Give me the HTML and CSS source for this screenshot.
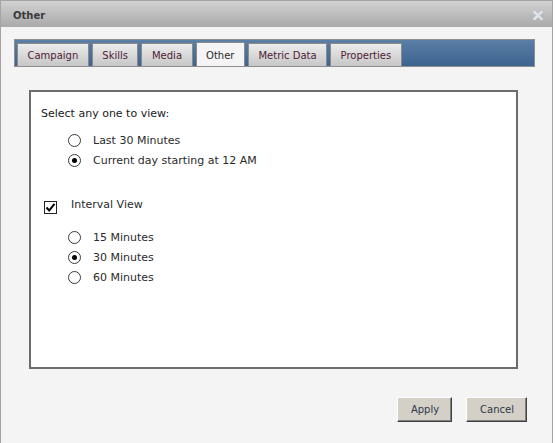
FILE: index.html
```html
<!DOCTYPE html>
<html>
<head>
<meta charset="utf-8">
<link rel="stylesheet" href="styles.css">
</head>
<body>
<div class="dialog">
  <div class="titlebar">
    <span class="title">Other</span>
    <svg class="close" width="10" height="9" viewBox="0 0 10 9"><path d="M1.5 1 L8.5 8 M8.5 1 L1.5 8" stroke="#dde6f0" stroke-width="2.4" stroke-linecap="square"/></svg>
  </div>
  <div class="body">
    <div class="tabstrip">
      <div class="tab">Campaign</div>
      <div class="tab">Skills</div>
      <div class="tab">Media</div>
      <div class="tab active">Other</div>
      <div class="tab">Metric Data</div>
      <div class="tab">Properties</div>
    </div>
    <div class="panel">
      <div class="heading">Select any one to view:</div>
      <div class="options">
        <label class="opt"><span class="radio"></span>Last 30 Minutes</label>
        <label class="opt"><span class="radio on"></span>Current day starting at 12 AM</label>
      </div>
      <label class="check-row"><span class="checkbox"><svg width="11" height="11" viewBox="0 0 11 11"><path d="M1.5 5.5 L4.2 8.5 L9.5 1.8" fill="none" stroke="#000" stroke-width="2"/></svg></span>Interval View</label>
      <div class="options sub">
        <label class="opt"><span class="radio"></span>15 Minutes</label>
        <label class="opt"><span class="radio on"></span>30 Minutes</label>
        <label class="opt"><span class="radio"></span>60 Minutes</label>
      </div>
    </div>
    <div class="actions">
      <button class="btn">Apply</button>
      <button class="btn">Cancel</button>
    </div>
  </div>
</div>
</body>
</html>
```
FILE: styles.css
```css
html, body {
  margin: 0;
  padding: 0;
  background: #ffffff;
}
body {
  font-family: "DejaVu Sans", Verdana, sans-serif;
  font-size: 11px;
  color: #222;
}
.dialog {
  width: 551px;
  height: 460px;
  border: 1px solid #a4a4a4;
  background: #f4f4f4;
  overflow: hidden;
}
.titlebar {
  height: 26px;
  background: linear-gradient(#d2d2d2, #a9a9a9);
  display: flex;
  align-items: center;
  justify-content: space-between;
  padding: 0 9px 0 12px;
}
.title {
  font-weight: bold;
  font-size: 10px;
  color: #3a3a3a;
  line-height: 12px;
  padding-top: 4px;
}
.close {
  display: block;
  margin-top: 3px;
}
.body {
  padding: 12px 0 0 13px;
}
.tabstrip {
  width: 515px;
  height: 23px;
  border: 1px solid #8e8e8e;
  padding: 3px 2px 0 2px;
  background: linear-gradient(#5b7fa5, #3c648f);
  display: flex;
  align-items: flex-end;
  gap: 3px;
}
.tab {
  height: 22px;
  line-height: 24px;
  padding: 0 9.5px;
  border: 1px solid #8a8a8a;
  border-bottom: none;
  background: linear-gradient(#ececec, #c6c6c6);
  font-size: 10px;
  color: #4f2236;
  overflow: hidden;
}
.tab.active {
  height: 23px;
  line-height: 25px;
  background: #f4f4f4;
  color: #2b2b2b;
}
.panel {
  margin: 23px 0 0 15px;
  width: 475px;
  height: 260px;
  border: 2px solid #6c6c6c;
  background: #fff;
  padding: 15px 0 0 10px;
}
.heading {
  line-height: 14px;
  color: #1a1a1a;
}
.options {
  margin: 13px 0 0 27px;
  display: flex;
  flex-direction: column;
  gap: 6px;
}
.opt {
  display: flex;
  align-items: center;
  height: 14px;
  line-height: 14px;
  color: #2a2a2a;
}
.radio {
  width: 11px;
  height: 11px;
  border: 1px solid #3a3a3a;
  border-radius: 50%;
  background: #fff;
  margin-right: 12px;
  position: relative;
  flex: none;
  margin-top: -1px;
}
.radio.on::after {
  content: "";
  position: absolute;
  left: 3px;
  top: 3px;
  width: 5px;
  height: 5px;
  border-radius: 50%;
  background: #000;
}
.check-row {
  display: flex;
  align-items: flex-start;
  margin: 30px 0 0 3px;
  line-height: 14px;
  color: #2a2a2a;
}
.checkbox {
  width: 11px;
  height: 11px;
  border: 1px solid #222;
  background: #fff;
  margin: 3px 14px 0 0;
  flex: none;
  display: flex;
}
.checkbox svg {
  display: block;
}
.options.sub {
  margin-top: 17px;
}
.actions {
  display: flex;
  justify-content: flex-end;
  gap: 14px;
  margin: 28px 25px 0 0;
}
.btn {
  font-family: "DejaVu Sans", Verdana, sans-serif;
  font-size: 10px;
  color: #2d3848;
  height: 25px;
  padding: 0 12px 0 13px;
  background: #d4d0c8;
  border: 1px solid;
  border-color: #ffffff #404040 #404040 #ffffff;
  box-shadow: inset -1px -1px 0 #808080;
  margin: 0;
}
```
